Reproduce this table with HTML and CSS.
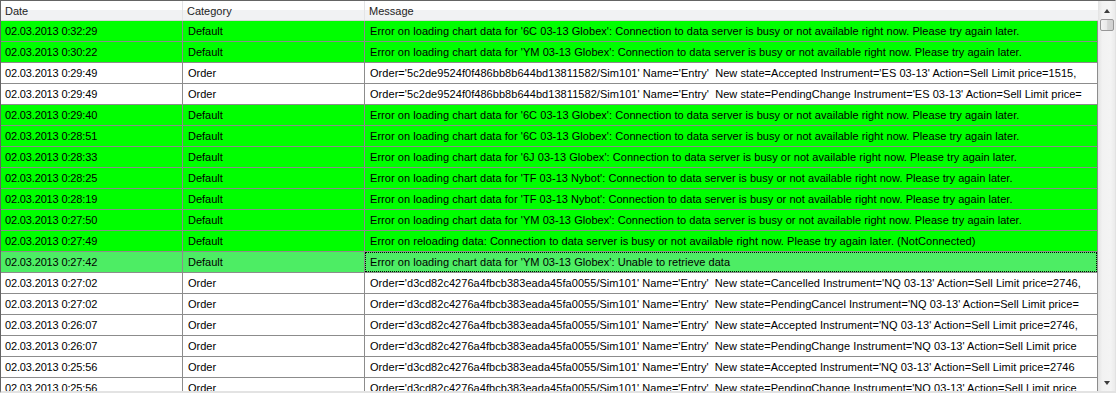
FILE: index.html
```html
<!DOCTYPE html>
<html>
<head>
<meta charset="utf-8">
<link rel="stylesheet" href="styles.css">
</head>
<body>
<div class="grid">
  <div class="table">
    <div class="header">
      <div class="hcell">Date</div>
      <div class="hcell">Category</div>
      <div class="hcell last">Message</div>
    </div>
    <div class="rows">
      <div class="row green"><div class="cell date">02.03.2013 0:32:29</div><div class="cell">Default</div><div class="cell msg">Error on loading chart data for '6C 03-13 Globex': Connection to data server is busy or not available right now. Please try again later.</div></div>
      <div class="row green"><div class="cell date">02.03.2013 0:30:22</div><div class="cell">Default</div><div class="cell msg">Error on loading chart data for 'YM 03-13 Globex': Connection to data server is busy or not available right now. Please try again later.</div></div>
      <div class="row"><div class="cell date">02.03.2013 0:29:49</div><div class="cell">Order</div><div class="cell msg">Order='5c2de9524f0f486bb8b644bd13811582/Sim101' Name='Entry'  New state=Accepted Instrument='ES 03-13' Action=Sell Limit price=1515,</div></div>
      <div class="row"><div class="cell date">02.03.2013 0:29:49</div><div class="cell">Order</div><div class="cell msg">Order='5c2de9524f0f486bb8b644bd13811582/Sim101' Name='Entry'  New state=PendingChange Instrument='ES 03-13' Action=Sell Limit price=</div></div>
      <div class="row green"><div class="cell date">02.03.2013 0:29:40</div><div class="cell">Default</div><div class="cell msg">Error on loading chart data for '6C 03-13 Globex': Connection to data server is busy or not available right now. Please try again later.</div></div>
      <div class="row green"><div class="cell date">02.03.2013 0:28:51</div><div class="cell">Default</div><div class="cell msg">Error on loading chart data for '6C 03-13 Globex': Connection to data server is busy or not available right now. Please try again later.</div></div>
      <div class="row green"><div class="cell date">02.03.2013 0:28:33</div><div class="cell">Default</div><div class="cell msg">Error on loading chart data for '6J 03-13 Globex': Connection to data server is busy or not available right now. Please try again later.</div></div>
      <div class="row green"><div class="cell date">02.03.2013 0:28:25</div><div class="cell">Default</div><div class="cell msg">Error on loading chart data for 'TF 03-13 Nybot': Connection to data server is busy or not available right now. Please try again later.</div></div>
      <div class="row green"><div class="cell date">02.03.2013 0:28:19</div><div class="cell">Default</div><div class="cell msg">Error on loading chart data for 'TF 03-13 Nybot': Connection to data server is busy or not available right now. Please try again later.</div></div>
      <div class="row green"><div class="cell date">02.03.2013 0:27:50</div><div class="cell">Default</div><div class="cell msg">Error on loading chart data for 'YM 03-13 Globex': Connection to data server is busy or not available right now. Please try again later.</div></div>
      <div class="row green"><div class="cell date">02.03.2013 0:27:49</div><div class="cell">Default</div><div class="cell msg">Error on reloading data: Connection to data server is busy or not available right now. Please try again later. (NotConnected)</div></div>
      <div class="row selected"><div class="cell date">02.03.2013 0:27:42</div><div class="cell">Default</div><div class="cell msg focus">Error on loading chart data for 'YM 03-13 Globex': Unable to retrieve data</div></div>
      <div class="row"><div class="cell date">02.03.2013 0:27:02</div><div class="cell">Order</div><div class="cell msg">Order='d3cd82c4276a4fbcb383eada45fa0055/Sim101' Name='Entry'  New state=Cancelled Instrument='NQ 03-13' Action=Sell Limit price=2746,</div></div>
      <div class="row"><div class="cell date">02.03.2013 0:27:02</div><div class="cell">Order</div><div class="cell msg">Order='d3cd82c4276a4fbcb383eada45fa0055/Sim101' Name='Entry'  New state=PendingCancel Instrument='NQ 03-13' Action=Sell Limit price=</div></div>
      <div class="row"><div class="cell date">02.03.2013 0:26:07</div><div class="cell">Order</div><div class="cell msg">Order='d3cd82c4276a4fbcb383eada45fa0055/Sim101' Name='Entry'  New state=Accepted Instrument='NQ 03-13' Action=Sell Limit price=2746,</div></div>
      <div class="row"><div class="cell date">02.03.2013 0:26:07</div><div class="cell">Order</div><div class="cell msg">Order='d3cd82c4276a4fbcb383eada45fa0055/Sim101' Name='Entry'  New state=PendingChange Instrument='NQ 03-13' Action=Sell Limit price</div></div>
      <div class="row"><div class="cell date">02.03.2013 0:25:56</div><div class="cell">Order</div><div class="cell msg">Order='d3cd82c4276a4fbcb383eada45fa0055/Sim101' Name='Entry'  New state=Accepted Instrument='NQ 03-13' Action=Sell Limit price=2746</div></div>
      <div class="row"><div class="cell date">02.03.2013 0:25:56</div><div class="cell">Order</div><div class="cell msg">Order='d3cd82c4276a4fbcb383eada45fa0055/Sim101' Name='Entry'  New state=PendingChange Instrument='NQ 03-13' Action=Sell Limit price</div></div>
    </div>
  </div>
  <div class="vscroll">
    <div class="sbtn"><span class="arrow up"></span></div>
    <div class="track">
      <div class="thumb"></div>
    </div>
    <div class="sbtn"><span class="arrow down"></span></div>
  </div>
</div>
</body>
</html>
```

FILE: styles.css
```css
html, body {
  margin: 0;
  padding: 0;
  background: #ffffff;
  overflow: hidden;
}

.grid {
  display: flex;
  width: 1116px;
  height: 393px;
  box-sizing: border-box;
  border-top: 1px solid #646464;
  border-left: 1px solid #646464;
  border-right: 1px solid #e3e3e3;
  border-bottom: 2px solid #e3e3e3;
  font-family: "Liberation Sans", Arial, sans-serif;
  font-size: 11px;
  color: #000000;
  overflow: hidden;
}

.table {
  width: 1097px;
  overflow: hidden;
  display: flex;
  flex-direction: column;
}

.header {
  display: grid;
  grid-template-columns: 182px 182px 733px;
  height: 20px;
  box-sizing: border-box;
  border-bottom: 1px solid #d5d5d5;
  background: linear-gradient(to bottom, #ffffff 0%, #ffffff 45%, #f1f2f3 50%, #f1f2f3 100%);
  flex-shrink: 0;
}

.hcell {
  display: flex;
  align-items: center;
  padding: 1px 0 0 4px;
  box-sizing: border-box;
  border-right: 1px solid #e3e4e6;
  color: #1e1e1e;
  white-space: nowrap;
}

.hcell.last {
  border-right: none;
}

.rows {
  display: flex;
  flex-direction: column;
}

.row {
  display: grid;
  grid-template-columns: 182px 182px 733px;
  height: 21px;
  flex-shrink: 0;
  box-sizing: border-box;
  background: #ffffff;
}

.row.green {
  background: #00ff00;
}

.row.selected {
  background: #4ded64;
}

.cell {
  box-sizing: border-box;
  border-right: 1px solid #8c8c8c;
  border-bottom: 1px solid #8c8c8c;
  padding: 0 0 0 5px;
  display: flex;
  align-items: center;
  white-space: pre;
  overflow: hidden;
  position: relative;
}

.cell.date {
  padding-left: 4px;
  letter-spacing: -0.15px;
}

.cell.msg {
  letter-spacing: 0.05px;
}

.cell.focus::after {
  content: "";
  position: absolute;
  left: 0;
  top: 0;
  right: 0;
  bottom: 0;
  border: 1px dotted #000000;
}

.vscroll {
  width: 17px;
  display: flex;
  flex-direction: column;
  background: linear-gradient(to right, #e3e3e3 0%, #f2f2f2 25%, #f4f4f4 75%, #ebebeb 100%);
}

.sbtn {
  height: 17px;
  display: flex;
  align-items: center;
  justify-content: center;
  flex-shrink: 0;
}

.arrow {
  width: 0;
  height: 0;
  border-left: 3.5px solid transparent;
  border-right: 3.5px solid transparent;
}

.arrow.up {
  border-bottom: 4px solid #3c3c3c;
  margin-top: 2px;
}

.arrow.down {
  border-top: 4px solid #3c3c3c;
}

.track {
  flex: 1;
  padding: 1px 1px 0 2px;
}

.thumb {
  height: 12px;
  box-sizing: border-box;
  border: 1px solid #979797;
  border-radius: 2px;
  background: linear-gradient(to right, #f3f3f3 0%, #e8e8e8 50%, #d6d6d6 55%, #d0d0d0 100%);
}
```
